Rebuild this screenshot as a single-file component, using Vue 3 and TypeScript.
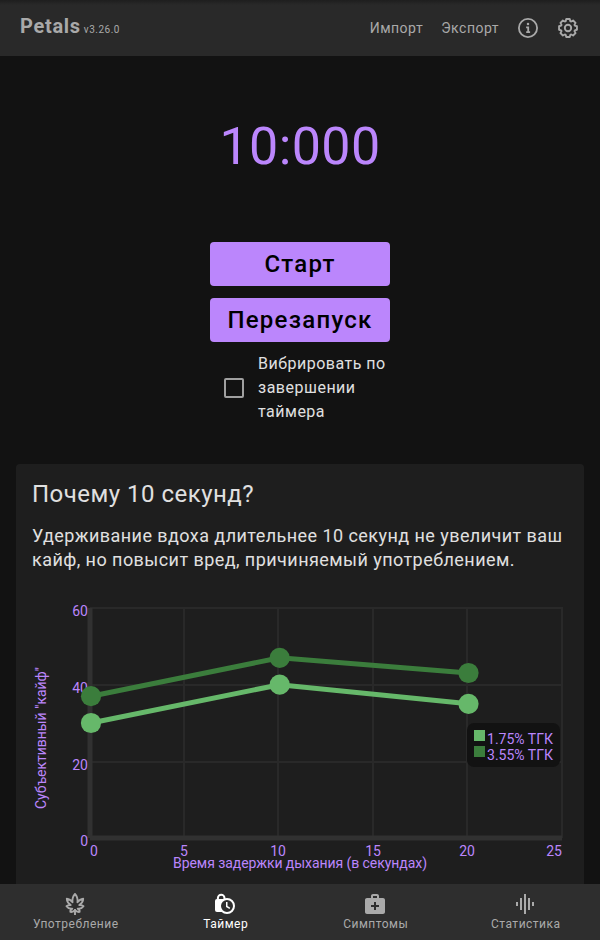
<script setup lang="ts">
import { ref } from 'vue'

interface Series { label: string; color: string; points: [number, number][] }

const vibrate = ref(false)
const series: Series[] = [
  { label: '1.75% ТГК', color: '#66b86a', points: [[91, 723], [279.7, 684.7], [468.5, 703.8]] },
  { label: '3.55% ТГК', color: '#3b7d3c', points: [[91, 696.2], [279.7, 657.8], [468.5, 673]] },
]
const xLines = [184, 278, 373, 467, 562]
const yLines = [608, 685, 762]
const xTicks = [
  { x: 94, text: '0' }, { x: 184, text: '5' }, { x: 278, text: '10' },
  { x: 373, text: '15' }, { x: 467, text: '20' }, { x: 554, text: '25' },
]
const yTicks = [
  { y: 616, text: '60' }, { y: 693, text: '40' }, { y: 770, text: '20' }, { y: 846, text: '0' },
]
const line = (s: Series): string => s.points.map((p) => p.join(',')).join(' ')

const tabs = [
  { id: 'use', label: 'Употребление' },
  { id: 'timer', label: 'Таймер' },
  { id: 'symptoms', label: 'Симптомы' },
  { id: 'stats', label: 'Статистика' },
]
const active = ref('timer')

const teeth = (): string => {
  const pts: string[] = []
  const at = (r: number, deg: number): string => {
    const a = (deg * Math.PI) / 180
    return `${(12 + r * Math.cos(a)).toFixed(2)},${(12 + r * Math.sin(a)).toFixed(2)}`
  }
  for (let i = 0; i < 8; i++) {
    const c = i * 45
    pts.push(at(7.2, c - 19), at(9.1, c - 11), at(9.1, c + 11), at(7.2, c + 19))
  }
  return pts.join(' ')
}
const gear = teeth()
</script>

<template>
  <div class="app">
    <header class="bar">
      <div class="brand"><span class="name">Petals</span><span class="version">v3.26.0</span></div>
      <nav class="actions">
        <a class="import">Импорт</a>
        <a class="export">Экспорт</a>
        <svg class="icon info" viewBox="0 0 24 24">
          <circle cx="12" cy="12" r="9.1" fill="none" stroke="currentColor" stroke-width="1.8" />
          <circle cx="12" cy="8" r="1.25" fill="currentColor" />
          <path d="M10.1 11.4h2.1v4.6M10.2 16.2h3.9" fill="none" stroke="currentColor" stroke-width="1.8" />
        </svg>
        <svg class="icon" viewBox="0 0 24 24" fill="none" stroke="currentColor">
          <polygon :points="gear" stroke-width="1.9" stroke-linejoin="round" />
          <circle cx="12" cy="12" r="3.2" stroke-width="1.9" />
        </svg>
      </nav>
    </header>

    <main class="content">
      <div class="clock">10:000</div>
      <div class="controls">
        <button class="btn">Старт</button>
        <button class="btn">Перезапуск</button>
        <label class="check">
          <input v-model="vibrate" type="checkbox" class="box" />
          <span>Вибрировать по завершении таймера</span>
        </label>
      </div>

      <section class="card">
        <h2>Почему 10 секунд?</h2>
        <p>Удерживание вдоха длительнее 10 секунд не увеличит ваш кайф, но повысит вред, причиняемый употреблением.</p>
        <svg class="chart" viewBox="32 590 536 294">
          <g stroke="#292929" stroke-width="2">
            <line v-for="x in xLines" :key="x" :x1="x" :x2="x" y1="608" y2="838" />
            <line v-for="y in yLines" :key="y" x1="90" x2="563" :y1="y" :y2="y" />
          </g>
          <g stroke="#313131" stroke-width="5">
            <line x1="90" x2="90" y1="608" y2="838" />
            <line x1="90" x2="562" y1="838" y2="838" />
          </g>
          <g class="ticks">
            <text v-for="t in yTicks" :key="t.text" x="88" :y="t.y" text-anchor="end">{{ t.text }}</text>
            <text v-for="t in xTicks" :key="t.text" :x="t.x" y="856" text-anchor="middle">{{ t.text }}</text>
            <text x="300" y="868" text-anchor="middle" textLength="254">Время задержки дыхания (в секундах)</text>
            <text transform="translate(46 738) rotate(-90)" text-anchor="middle" textLength="142">Субъективный "кайф"</text>
          </g>
          <g v-for="s in series" :key="s.label">
            <polyline :points="line(s)" fill="none" :stroke="s.color" stroke-width="5" />
            <circle v-for="p in s.points" :key="p[0]" :cx="p[0]" :cy="p[1]" r="10.1" :fill="s.color" />
          </g>
          <rect x="467" y="723" width="93" height="44" rx="7" fill="#121212" />
          <g v-for="(s, i) in series" :key="s.label" class="ticks">
            <rect x="474" :y="730 + i * 16" width="11" height="11" :fill="s.color" />
            <text x="487" :y="744 + i * 16" textLength="66">{{ s.label }}</text>
          </g>
        </svg>
      </section>
    </main>

    <nav class="tabs">
      <a v-for="t in tabs" :key="t.id" class="tab" :class="{ active: active === t.id }" @click="active = t.id">
        <svg class="icon" viewBox="0 0 24 24">
          <g v-if="t.id === 'use'" fill="none" stroke="currentColor" stroke-width="1.9" stroke-linejoin="round">
            <path d="M12 18.2C10.6 19.7 8.7 20.1 7.4 19.8C7.2 18.6 8 17.4 9.3 16.7C6.8 17 4.7 16.1 3.5 14.3C4.6 13.3 6.2 12.9 7.7 13.1C5.2 11.4 3.9 9.2 3.8 6.8C6 7 8.1 8.3 9.5 10.3C9.1 7 10.1 4 12 1.9C13.9 4 14.9 7 14.5 10.3C15.9 8.3 18 7 20.2 6.8C20.1 9.2 18.8 11.4 16.3 13.1C17.8 12.9 19.4 13.3 20.5 14.3C19.3 16.1 17.2 17 14.7 16.7C16 17.4 16.8 18.6 16.6 19.8C15.3 20.1 13.4 19.7 12 18.2Z" />
            <path d="M12 17v6" />
          </g>
          <g v-else-if="t.id === 'timer'">
            <path d="M4.9 8V6a3.3 3.3 0 0 1 6.6 0v2" fill="none" stroke="currentColor" stroke-width="2" />
            <path d="M4 7h9v13H4a2 2 0 0 1-2-2V9a2 2 0 0 1 2-2Z" fill="currentColor" />
            <circle cx="14" cy="14" r="7" fill="#2e2e2e" stroke="currentColor" stroke-width="2" />
            <path d="M13.75 10v4.5l3.1 1.9" fill="none" stroke="currentColor" stroke-width="1.5" />
          </g>
          <path v-else-if="t.id === 'symptoms'" fill="currentColor" d="M20 6h-4V4c0-1.1-.9-2-2-2h-4c-1.1 0-2 .9-2 2v2H4c-1.1 0-2 .9-2 2v12c0 1.1.9 2 2 2h16c1.1 0 2-.9 2-2V8c0-1.1-.9-2-2-2zM10 4h4v2h-4V4zm6 11h-3v3h-2v-3H8v-2h3v-3h2v3h3v2z" />
          <path v-else fill="currentColor" d="M7 18h2V6H7v12zm4 4h2V2h-2v20zm-8-8h2v-4H3v4zm12 4h2V6h-2v12zm4-8v4h2v-4h-2z" />
        </svg>
        <span>{{ t.label }}</span>
      </a>
    </nav>
  </div>
</template>

<style>
body { background: #121212; }
</style>

<style scoped>
.app {
  display: flex;
  flex-direction: column;
  height: 940px;
  overflow: hidden;
  box-sizing: border-box;
  background: #121212;
  color: #e0e0e0;
  font-family: Roboto, "Noto Sans", sans-serif;
}
.bar {
  flex: none;
  height: 56px;
  box-sizing: border-box;
  display: flex;
  justify-content: space-between;
  align-items: center;
  padding: 0 20px;
  background: linear-gradient(#1e1e1e, #292929 5px);
  color: #a9a9a9;
}
.brand { display: flex; align-items: baseline; gap: 3px; margin-top: -4px; }
.name { font-size: 20px; font-weight: 700; letter-spacing: 0.7px; }
.version { font-size: 10px; letter-spacing: 0.5px; }
.actions { display: flex; align-items: center; font-size: 14px; letter-spacing: 0.5px; }
.import { margin-right: 18px; }
.export { margin-right: 17px; }
.icon { display: block; width: 24px; height: 24px; }
.info { margin-right: 16px; }
.bar { padding-right: 20px; }
.content { flex: 1; min-height: 0; overflow: hidden; display: flex; flex-direction: column; }
.clock {
  flex: none;
  padding-top: 61px;
  height: 125px;
  line-height: 60px;
  text-align: center;
  font-size: 52px;
  letter-spacing: 0.4px;
  color: #bb86fc;
}
.controls { flex: none; width: 180px; margin: 0 auto; display: flex; flex-direction: column; gap: 12px; }
.btn {
  height: 44px;
  padding: 0;
  border: 0;
  border-radius: 4px;
  background: #bb86fc;
  color: #000;
  font: 500 24px Roboto, sans-serif;
  letter-spacing: 1.25px;
}
.check {
  display: flex;
  align-items: center;
  gap: 14px;
  padding-left: 14px;
  margin-top: -2px;
  font-size: 16px;
  line-height: 24px;
  letter-spacing: 0.5px;
}
.box {
  appearance: none;
  flex: none;
  width: 20px;
  height: 20px;
  margin: 0;
  box-sizing: border-box;
  border: 2px solid #a0a0a0;
  border-radius: 2px;
}
.card { flex: none; margin: 40px 16px 0; padding: 0 16px 16px; background: #1e1e1e; border-radius: 4px; }
h2 { margin: 0; padding-top: 14px; font-size: 24px; line-height: 32px; font-weight: 400; letter-spacing: 0.48px; }
p { margin: 14px -8px 0 0; font-size: 18px; line-height: 24px; letter-spacing: 0.44px; }
.chart { display: block; width: 536px; height: 294px; margin-top: 18px; }
.ticks text { font-size: 14px; fill: #bb86fc; }
.tabs { flex: none; height: 56px; display: grid; grid-template-columns: repeat(4, 1fr); background: #2e2e2e; color: #aaa; }
.tab { display: flex; flex-direction: column; align-items: center; padding-top: 8px; font-size: 12px; line-height: 16px; letter-spacing: 0.5px; }
.tab span { padding-left: 1.5px; }
.tab.active { color: #fff; }
</style>
